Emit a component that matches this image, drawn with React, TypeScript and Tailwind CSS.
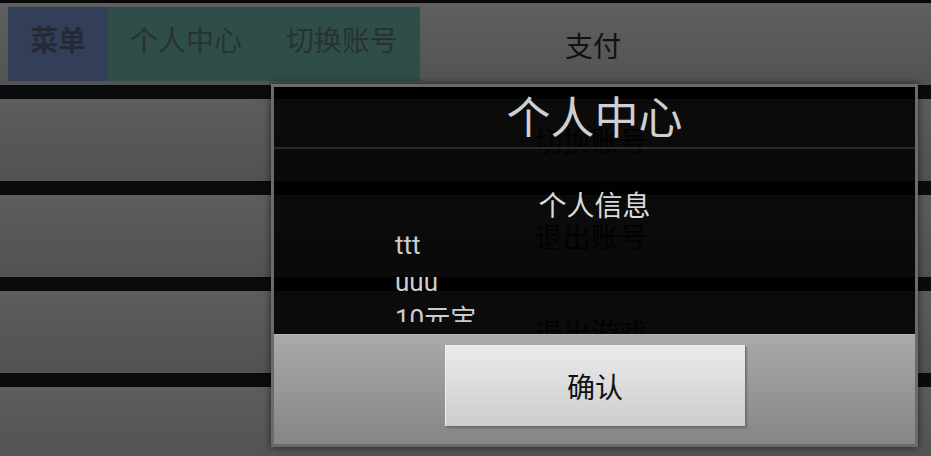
import React from 'react';

const cjk = "font-['Noto_Sans_CJK_SC',sans-serif]";

const rows = ['切换账号', '退出账号', '退出游戏', ''];

const infoLines = ['ttt', 'uuu', '10元宝', ''];

function TopBar() {
  return (
    <div className="flex h-[82px] items-start bg-gradient-to-b from-[#5f5f5f] to-[#535353] pl-[8px] pt-[4px]">
      <div className={`flex h-[74px] text-[28px] leading-[32px] ${cjk}`}>
        <div className="flex w-[100px] items-center justify-center bg-[#333f58] pb-[10px] font-bold text-[#252a36]">
          菜单
        </div>
        <div className="flex bg-[#2f4e4a] text-[#28332f]">
          <div className="flex w-[156px] items-center justify-center pb-[10px]">个人中心</div>
          <div className="flex w-[156px] items-center justify-center pb-[10px]">切换账号</div>
        </div>
      </div>
      <div className={`ml-[145px] self-center pb-[2px] text-[28px] leading-[32px] text-[#111] ${cjk}`}>支付</div>
    </div>
  );
}

function MenuRow({ label }: { label: string }) {
  return (
    <div className="mt-[14px] flex h-[82px] shrink-0 items-center justify-center bg-gradient-to-b from-[#5d5d5d] to-[#525252] pl-[251px]">
      <span className={`text-[28px] leading-[32px] text-[#111] ${cjk}`}>{label}</span>
    </div>
  );
}

function ProfileDialog() {
  return (
    <div className="absolute left-[271px] top-[84px] flex h-[363px] w-[647px] flex-col border-[3px] border-[#6b6b6b] bg-black/[0.88] shadow-[0_0_8px_rgba(0,0,0,0.6)]">
      {/* title */}
      <div className={`h-[60px] shrink-0 text-center text-[44px] leading-[57px] text-[#cfcfcf] ${cjk}`}>个人中心</div>
      <div className="h-[2px] shrink-0 bg-[#2b2b2b]" />

      {/* scroll content, cut off at the bottom */}
      <div className="h-[173px] shrink-0 overflow-hidden pt-[39px]">
        <div className={`text-center text-[28px] leading-[32px] text-[#dadada] ${cjk}`}>个人信息</div>
        <div className="mt-[7px] pl-[121px] font-['Roboto','Noto_Sans_CJK_SC',sans-serif] text-[26px] leading-[37px] text-[#cdcdcd]">
          {infoLines.map((line, i) => (
            <div key={i} className="h-[37px]">{line}</div>
          ))}
        </div>
      </div>
      <div className="flex-1" />

      {/* button bar */}
      <div className="flex h-[110px] shrink-0 justify-center border-t border-[#b6b6b6] bg-gradient-to-b from-[#a9a9a9] to-[#868686] pt-[10px]">
        <button className="flex h-[81px] w-[300px] items-center justify-center border-l border-t border-[#f2f2f2] bg-gradient-to-b from-[#eaeaea] to-[#cdcdcd] shadow-[1px_1px_0_#6f6f6f,2px_2px_2px_rgba(0,0,0,0.25)]">
          <span className={`text-[28px] leading-[32px] text-[#111] ${cjk}`}>确认</span>
        </button>
      </div>
    </div>
  );
}

export default function App() {
  return (
    <div className="relative h-[456px] w-[931px] overflow-hidden bg-[#0a0b0d]">
      <div className="h-[3px] bg-[#080808]" />
      <TopBar />
      {rows.map((label, i) => (
        <MenuRow key={i} label={label} />
      ))}
      <ProfileDialog />
    </div>
  );
}
